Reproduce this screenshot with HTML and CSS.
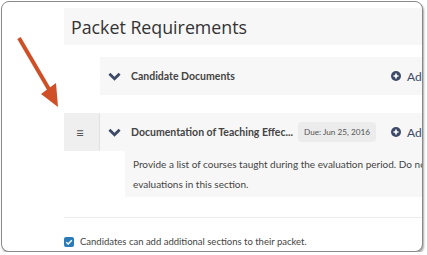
FILE: index.html
```html
<!DOCTYPE html>
<html lang="en">
<head>
  <meta charset="UTF-8">
  <title>Packet Requirements</title>
  <link rel="stylesheet" href="styles.css">
</head>
<body>
  <div class="window">
    <div class="content">
      <div class="section-title">Packet Requirements</div>

      <div class="req-list">
        <div class="req">
          <div class="handle handle-empty"></div>
          <div class="req-main">
            <svg class="chevron" viewBox="0 0 14 9"><path d="M1.5 1.5 L7 7 L12.5 1.5" /></svg>
            <span class="req-title">Candidate Documents</span>
            <span class="add">
              <svg class="plus" viewBox="0 0 12 12"><circle cx="6" cy="6" r="6" /><path d="M6 3 V9 M3 6 H9" /></svg>
              Add
            </span>
          </div>
        </div>

        <div class="req req-open">
          <div class="handle">&#8801;</div>
          <div class="req-main">
            <svg class="chevron" viewBox="0 0 14 9"><path d="M1.5 1.5 L7 7 L12.5 1.5" /></svg>
            <span class="req-title">Documentation of Teaching Effec...</span>
            <span class="due">Due: Jun 25, 2016</span>
            <span class="add">
              <svg class="plus" viewBox="0 0 12 12"><circle cx="6" cy="6" r="6" /><path d="M6 3 V9 M3 6 H9" /></svg>
              Add
            </span>
          </div>
        </div>
        <div class="req-desc">
          Provide a list of courses taught during the evaluation period. Do not include student<br>
          evaluations in this section.
        </div>
      </div>

      <div class="divider"></div>

      <label class="option">
        <span class="checkbox">
          <svg viewBox="0 0 10 10"><path d="M2.3 5.2 L4.2 7 L7.8 3.2" /></svg>
        </span>
        Candidates can add additional sections to their packet.
      </label>
    </div>

    <svg class="arrow" viewBox="0 0 70 120">
      <line x1="18" y1="37" x2="49" y2="90" />
      <polygon points="40,93 57,106 55,82" />
    </svg>
  </div>
</body>
</html>
```

FILE: styles.css
```css
* {
  margin: 0;
  padding: 0;
  box-sizing: border-box;
}
body {
  background-color: #fff;
  font-family: Lato, "Open Sans", sans-serif;
  color: #444;
}
.window {
  position: relative;
  width: 422px;
  height: 251px;
  margin: 1px 0 0 1px;
  border: 1px solid #8a8a8a;
  border-radius: 8px;
  box-shadow: 1px 2px 2px rgba(0, 0, 0, 0.35);
  overflow: hidden;
  background-color: #fff;
}
.content {
  width: 380px;
  margin: 6px 0 0 62px;
}
.section-title {
  height: 37px;
  background-color: #f7f7f7;
  display: flex;
  align-items: center;
  padding-left: 7px;
  font-family: "Open Sans", sans-serif;
  font-size: 17.8px;
  color: #333;
  white-space: nowrap;
}
.req-list {
  margin-top: 12px;
}
.req {
  display: flex;
  height: 38px;
  margin-bottom: 18px;
}
.req-open {
  margin-bottom: 0;
}
.handle {
  flex-shrink: 0;
  width: 36px;
  background-color: #efefef;
  border-right: 1px solid #e2e2e2;
  display: flex;
  align-items: center;
  justify-content: center;
  padding-right: 3px;
  font-size: 14px;
  color: #555;
}
.handle-empty {
  background-color: transparent;
  border-right: none;
}
.req-main {
  flex: 1;
  display: flex;
  align-items: center;
  background-color: #f7f7f7;
  padding-left: 8px;
  white-space: nowrap;
}
.chevron {
  flex-shrink: 0;
  width: 13px;
  height: 9px;
  margin-right: 10px;
}
.chevron path {
  fill: none;
  stroke: #3d4b68;
  stroke-width: 3;
}
.req-title {
  font-family: Lato, sans-serif;
  font-weight: 700;
  font-size: 10.5px;
  color: #444;
}
.due {
  margin-left: 5px;
  height: 20px;
  line-height: 20px;
  padding: 0 6px;
  background-color: #ececec;
  border-radius: 4px;
  font-size: 8.2px;
  color: #555;
}
.add {
  flex-shrink: 0;
  display: flex;
  align-items: center;
  gap: 6px;
  margin-left: auto;
  width: 53px;
  font-size: 12px;
  color: #3d4b68;
}
.plus {
  width: 10px;
  height: 10px;
}
.plus circle {
  fill: #3d4b68;
}
.plus path {
  stroke: #fff;
  stroke-width: 2;
}
.req-desc {
  margin-left: 61px;
  height: 46px;
  background-color: #f7f7f7;
  padding: 3px 8px;
  font-size: 10px;
  line-height: 20px;
  color: #444;
  white-space: nowrap;
  overflow: hidden;
}
.divider {
  margin-top: 20px;
  border-top: 1px solid #ececec;
}
.option {
  display: flex;
  align-items: center;
  gap: 6px;
  margin-top: 18px;
  font-size: 9.5px;
  color: #444;
  white-space: nowrap;
}
.checkbox {
  flex-shrink: 0;
  width: 10px;
  height: 10px;
  border-radius: 2px;
  background-color: #2b7bb9;
  display: flex;
}
.checkbox svg {
  width: 10px;
  height: 10px;
}
.checkbox path {
  fill: none;
  stroke: #fff;
  stroke-width: 1.5;
}
.arrow {
  position: absolute;
  left: -1px;
  top: -1px;
  width: 70px;
  height: 120px;
}
.arrow line {
  stroke: #cf4f27;
  stroke-width: 4;
}
.arrow polygon {
  fill: #cf4f27;
}
```
